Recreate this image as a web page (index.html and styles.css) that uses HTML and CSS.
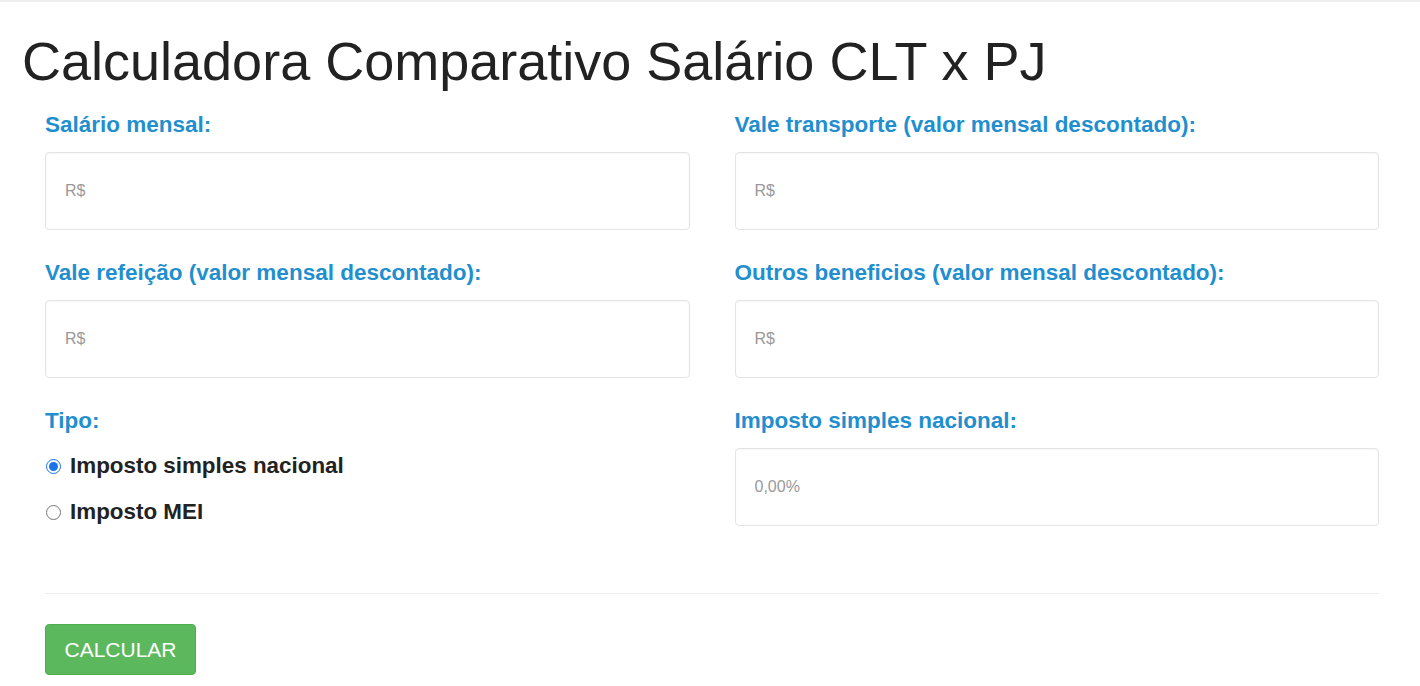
FILE: index.html
```html
<!DOCTYPE html>
<html lang="pt-BR">
  <head>
    <meta charset="UTF-8" />
    <meta name="viewport" content="width=device-width, initial-scale=1.0" />
    <link rel="stylesheet" href="styles.css">
    <title>Calculadora CLT x PJ</title>
  </head>
  <body>
    <div class="container">
      <h1 class="title">Calculadora Comparativo Salário CLT x PJ</h1>
      <div class="form">
        <div class="field">
          <label class="label" for="salario">Salário mensal:</label>
          <input class="input" id="salario" type="text" placeholder="R$" />
        </div>
        <div class="field">
          <label class="label" for="transporte">Vale transporte (valor mensal descontado):</label>
          <input class="input" id="transporte" type="text" placeholder="R$" />
        </div>
        <div class="field">
          <label class="label" for="refeicao">Vale refeição (valor mensal descontado):</label>
          <input class="input" id="refeicao" type="text" placeholder="R$" />
        </div>
        <div class="field">
          <label class="label" for="outros">Outros beneficios (valor mensal descontado):</label>
          <input class="input" id="outros" type="text" placeholder="R$" />
        </div>
        <div class="field">
          <div class="label">Tipo:</div>
          <div class="radios">
            <label class="radio">
              <input type="radio" name="tipo" value="simples" checked />
              <span>Imposto simples nacional</span>
            </label>
            <label class="radio">
              <input type="radio" name="tipo" value="mei" />
              <span>Imposto MEI</span>
            </label>
          </div>
        </div>
        <div class="field">
          <label class="label" for="imposto">Imposto simples nacional:</label>
          <input class="input" id="imposto" type="text" placeholder="0,00%" />
        </div>
      </div>
      <hr class="divider" />
      <button class="btn" type="button">CALCULAR</button>
    </div>
  </body>
</html>
```

FILE: styles.css
```css
html {
  font-family: "Liberation Sans", Arial, Helvetica, sans-serif;
  color: #222222;
}
body {
  margin: 0;
  padding: 0;
  border-top: 2px solid #eeeeee;
}
.container {
  padding: 0 41px 0 45px;
}
.title {
  margin: 29px 0 0 -23px;
  font-size: 54px;
  font-weight: 400;
  line-height: 60px;
  color: #222222;
}
.form {
  display: grid;
  grid-template-columns: 1fr 1fr;
  column-gap: 45px;
  margin-top: 20px;
}
.field {
  display: flex;
  flex-direction: column;
  margin-bottom: 29px;
}
.label {
  font-size: 22.5px;
  font-weight: bold;
  line-height: 27px;
  color: #1f8fcf;
  margin-bottom: 14px;
}
.input {
  box-sizing: border-box;
  height: 78px;
  padding: 0 19px;
  border: 1px solid #e4e4e4;
  border-radius: 4px;
  box-shadow: inset 0 1px 2px rgba(0, 0, 0, 0.04);
  font-family: "Liberation Sans", Arial, sans-serif;
  font-size: 16px;
  color: #555555;
  background: #ffffff;
  outline: none;
}
.input::placeholder {
  color: #999999;
}
.radios {
  display: flex;
  flex-direction: column;
  gap: 20px;
  padding-top: 5px;
}
.radio {
  display: flex;
  align-items: center;
  gap: 9px;
  font-size: 22.4px;
  font-weight: bold;
  line-height: 26px;
  color: #222222;
}
.radio input {
  margin: 0 0 0 1px;
  width: 15px;
  height: 15px;
  accent-color: #1a73e8;
}
.divider {
  margin: 38px 0 30px;
  border: 0;
  border-top: 1px solid #eeeeee;
}
.btn {
  width: 151px;
  height: 51px;
  background: #5cb85c;
  border: 1px solid #4cae4c;
  border-radius: 4px;
  color: #ffffff;
  font-family: "Liberation Sans", Arial, sans-serif;
  font-size: 21px;
  padding: 0;
}
```
